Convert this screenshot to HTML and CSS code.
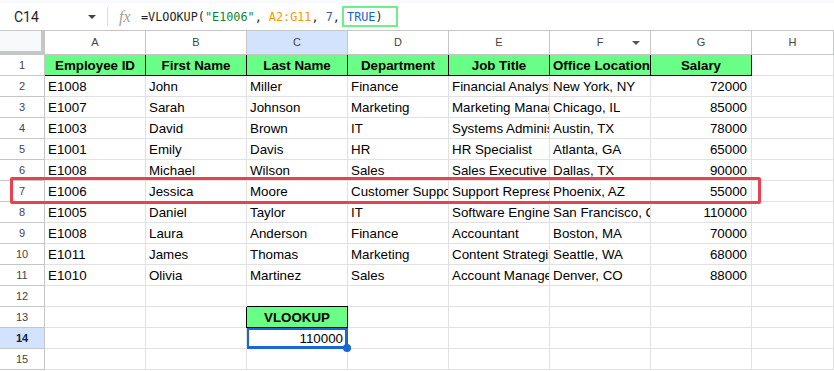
FILE: index.html
```html
<!DOCTYPE html>
<html lang="en">
<head>
    <meta charset="UTF-8">
    <title>VLOOKUP</title>
    <link rel="stylesheet" href="styles.css">
</head>
<body>
    <div class="formula-bar">
        <div class="name-box">
            <span>C14</span>
            <span class="caret"></span>
        </div>
        <div class="divider"></div>
        <div class="fx">fx</div>
        <div class="formula">=VLOOKUP(<span class="f-str">"E1006"</span>, <span class="f-range">A2:G11</span>, <span class="f-num">7</span>, <span class="f-bool">TRUE<span class="f-plain">)</span></span></div>
    </div>

    <div class="sheet">
        <div class="corner"></div>
        <div class="col-head">A</div>
        <div class="col-head">B</div>
        <div class="col-head active">C</div>
        <div class="col-head">D</div>
        <div class="col-head">E</div>
        <div class="col-head filter">F<span class="filter-caret"></span></div>
        <div class="col-head">G</div>
        <div class="col-head">H</div>

        <div class="row-head">1</div>
        <div class="cell head first">Employee ID</div>
        <div class="cell head">First Name</div>
        <div class="cell head">Last Name</div>
        <div class="cell head">Department</div>
        <div class="cell head">Job Title</div>
        <div class="cell head">Office Location</div>
        <div class="cell head">Salary</div>
        <div class="cell"></div>

        <div class="row-head">2</div>
        <div class="cell">E1008</div><div class="cell">John</div><div class="cell">Miller</div><div class="cell">Finance</div><div class="cell">Financial Analyst</div><div class="cell">New York, NY</div><div class="cell num">72000</div><div class="cell"></div>

        <div class="row-head">3</div>
        <div class="cell">E1007</div><div class="cell">Sarah</div><div class="cell">Johnson</div><div class="cell">Marketing</div><div class="cell">Marketing Manager</div><div class="cell">Chicago, IL</div><div class="cell num">85000</div><div class="cell"></div>

        <div class="row-head">4</div>
        <div class="cell">E1003</div><div class="cell">David</div><div class="cell">Brown</div><div class="cell">IT</div><div class="cell">Systems Administrator</div><div class="cell">Austin, TX</div><div class="cell num">78000</div><div class="cell"></div>

        <div class="row-head">5</div>
        <div class="cell">E1001</div><div class="cell">Emily</div><div class="cell">Davis</div><div class="cell">HR</div><div class="cell">HR Specialist</div><div class="cell">Atlanta, GA</div><div class="cell num">65000</div><div class="cell"></div>

        <div class="row-head">6</div>
        <div class="cell">E1008</div><div class="cell">Michael</div><div class="cell">Wilson</div><div class="cell">Sales</div><div class="cell">Sales Executive</div><div class="cell">Dallas, TX</div><div class="cell num">90000</div><div class="cell"></div>

        <div class="row-head">7</div>
        <div class="cell">E1006</div><div class="cell">Jessica</div><div class="cell">Moore</div><div class="cell">Customer Support</div><div class="cell">Support Representative</div><div class="cell">Phoenix, AZ</div><div class="cell num">55000</div><div class="cell"></div>

        <div class="row-head">8</div>
        <div class="cell">E1005</div><div class="cell">Daniel</div><div class="cell">Taylor</div><div class="cell">IT</div><div class="cell">Software Engineer</div><div class="cell">San Francisco, CA</div><div class="cell num">110000</div><div class="cell"></div>

        <div class="row-head">9</div>
        <div class="cell">E1008</div><div class="cell">Laura</div><div class="cell">Anderson</div><div class="cell">Finance</div><div class="cell">Accountant</div><div class="cell">Boston, MA</div><div class="cell num">70000</div><div class="cell"></div>

        <div class="row-head">10</div>
        <div class="cell">E1011</div><div class="cell">James</div><div class="cell">Thomas</div><div class="cell">Marketing</div><div class="cell">Content Strategist</div><div class="cell">Seattle, WA</div><div class="cell num">68000</div><div class="cell"></div>

        <div class="row-head">11</div>
        <div class="cell">E1010</div><div class="cell">Olivia</div><div class="cell">Martinez</div><div class="cell">Sales</div><div class="cell">Account Manager</div><div class="cell">Denver, CO</div><div class="cell num">88000</div><div class="cell"></div>

        <div class="row-head">12</div>
        <div class="cell"></div><div class="cell"></div><div class="cell"></div><div class="cell"></div><div class="cell"></div><div class="cell"></div><div class="cell"></div><div class="cell"></div>

        <div class="row-head">13</div>
        <div class="cell"></div><div class="cell"></div><div class="cell head boxed">VLOOKUP</div><div class="cell"></div><div class="cell"></div><div class="cell"></div><div class="cell"></div><div class="cell"></div>

        <div class="row-head active">14</div>
        <div class="cell"></div><div class="cell"></div><div class="cell num selected">110000</div><div class="cell"></div><div class="cell"></div><div class="cell"></div><div class="cell"></div><div class="cell"></div>

        <div class="row-head">15</div>
        <div class="cell"></div><div class="cell"></div><div class="cell"></div><div class="cell"></div><div class="cell"></div><div class="cell"></div><div class="cell"></div><div class="cell"></div>
    </div>

    <div class="match-box"></div>
</body>
</html>
```

FILE: styles.css
```css
* {
    margin: 0;
    padding: 0;
    box-sizing: border-box;
}

body {
    font-family: 'Liberation Sans', Arial, sans-serif;
    background-color: #fff;
    color: #000;
    position: relative;
    overflow: hidden;
}

/* formula bar */
.formula-bar {
    display: flex;
    align-items: center;
    height: 31px;
    border-top: 3px solid #f8fafd;
    border-bottom: 1px solid #c4c7c5;
    background: #fff;
}

.name-box {
    display: flex;
    align-items: center;
    justify-content: space-between;
    width: 96px;
    padding-left: 14px;
    font-family: 'Roboto', 'Liberation Sans', sans-serif;
    font-size: 14px;
    color: #1f1f1f;
}

.caret {
    width: 0;
    height: 0;
    border-left: 4px solid transparent;
    border-right: 4px solid transparent;
    border-top: 4px solid #444;
}

.divider {
    width: 1px;
    height: 19px;
    background: #dadce0;
    margin: 0 10px 0 11px;
}

.fx {
    font-family: 'Liberation Serif', serif;
    font-style: italic;
    font-size: 16px;
    color: #a0a0a0;
    width: 23px;
    padding-left: 1px;
}

.formula {
    font-family: 'DejaVu Sans Mono', monospace;
    font-size: 11.8px;
    color: #1f1f1f;
    white-space: pre;
}

.f-str { color: #188038; }
.f-range { color: #f29900; }
.f-num { color: #3e5c9a; }
.f-bool { color: #1a5fd0; position: relative; }
.f-plain { color: #1f1f1f; }

.f-bool::after {
    content: '';
    position: absolute;
    left: -5px;
    right: -15px;
    top: -4px;
    bottom: -3px;
    border: 2.5px solid #6def8a;
}

/* grid */
.sheet {
    display: grid;
    grid-template-columns: 45px repeat(7, 101px) 1fr;
    grid-template-rows: 24px;
    grid-auto-rows: 21px;
}

.corner {
    background: #f8f9fa;
    border-right: 4px solid #c4c7c5;
    border-bottom: 4px solid #c4c7c5;
}

.col-head {
    position: relative;
    text-align: center;
    font-size: 11px;
    line-height: 23px;
    color: #444;
    border-right: 1px solid #c4c7c5;
    border-bottom: 1px solid #c4c7c5;
}

.col-head.active,
.row-head.active {
    background: #d3e3fd;
}

.filter-caret {
    position: absolute;
    right: 10px;
    top: 10px;
    border-left: 4px solid transparent;
    border-right: 4px solid transparent;
    border-top: 4px solid #555;
}

.row-head {
    text-align: center;
    font-size: 11px;
    line-height: 20px;
    color: #444;
    border-right: 1px solid #c4c7c5;
    border-bottom: 1px solid #c4c7c5;
}

.row-head.active {
    font-weight: bold;
    color: #0b1f44;
}

.cell {
    position: relative;
    font-size: 13.33px;
    line-height: 20px;
    padding: 1px 3px 0;
    white-space: nowrap;
    overflow: hidden;
    border-right: 1px solid #e1e1e1;
    border-bottom: 1px solid #e1e1e1;
}

.cell.num {
    text-align: right;
    padding-right: 4px;
}

.cell.head {
    background: #69ff87;
    font-weight: bold;
    text-align: center;
    border-right-color: #000;
    border-bottom-color: #000;
}

.cell.boxed {
    box-shadow: 0 -1px 0 #000, -1px 0 0 #000;
}

.cell.selected {
    overflow: visible;
    box-shadow: inset 0 0 0 2px #1a66d2;
    border-right: 1px solid #1a66d2;
    border-bottom: 1px solid #1a66d2;
}

.cell.selected::after {
    content: '';
    position: absolute;
    right: -4px;
    bottom: -4px;
    width: 8px;
    height: 8px;
    border-radius: 50%;
    background: #1a66d2;
    z-index: 2;
}

/* red highlight round row 7 */
.match-box {
    position: absolute;
    left: 10px;
    top: 177px;
    width: 751px;
    height: 27px;
    border: 3px solid #e8414f;
    border-radius: 2px;
}
```
